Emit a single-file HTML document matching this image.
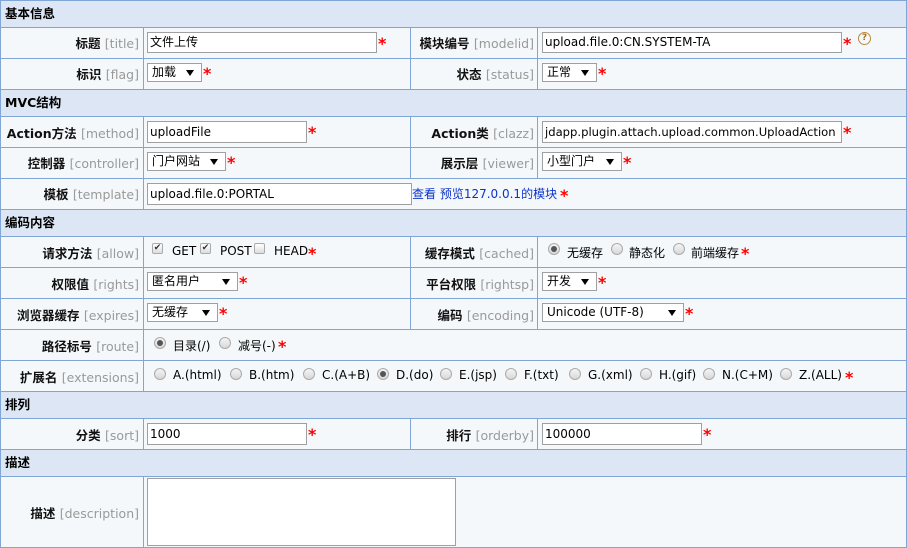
<!DOCTYPE html>
<html><head><meta charset="utf-8"><style>
*{box-sizing:border-box;margin:0;padding:0}
body{width:907px;height:548px;background:#f5f8fb;position:relative;overflow:hidden;font-family:"DejaVu Sans","Noto Sans CJK SC",sans-serif;font-size:12px;color:#000}
.a{position:absolute}
.h{position:absolute;left:0;width:907px;background:#dde6f4;font-weight:bold;font-size:12.5px;padding-left:5px}
.hl{position:absolute;left:0;width:907px;height:1px;background:#7fa6d4}
.vl{position:absolute;width:1px;background:#7fa6d4}
.lb{position:absolute;text-align:right;font-weight:bold;color:#111;white-space:nowrap;font-size:12.5px;margin-top:-1px}
.lb span{font-weight:normal;color:#999}
.in{position:absolute;background:#fff;border:1px solid #a0a0a0;padding-left:2px;white-space:nowrap;overflow:hidden}
.sel{position:absolute;background:#fff;border:1px solid #a0a0a0;padding-left:4px;white-space:nowrap}
.sel:after{content:"";position:absolute;right:7px;top:6px;border-left:4px solid transparent;border-right:4px solid transparent;border-top:6px solid #000}
.st{position:absolute;color:#f00;font-weight:bold;font-size:16px}
.cb{position:absolute;width:11px;height:11px;border:1px solid #aaa;border-radius:2px;background:linear-gradient(#fff,#ddd);font-size:9px;line-height:9px;text-align:center;color:#333}
.rd{position:absolute;width:12px;height:12px;border:1px solid #aaa;border-radius:50%;background:linear-gradient(#f4f4f4,#d8d8d8)}
.rd.on:after{content:"";position:absolute;left:2px;top:2px;width:6px;height:6px;border-radius:50%;background:#555}
.t{position:absolute;white-space:nowrap;margin-top:-1px}
</style></head><body>
<div class="h" style="top:1px;height:26px;line-height:26px">基本信息</div>
<div class="h" style="top:90px;height:26px;line-height:26px">MVC结构</div>
<div class="h" style="top:210px;height:26px;line-height:26px">编码内容</div>
<div class="h" style="top:392px;height:26px;line-height:26px">排列</div>
<div class="h" style="top:450px;height:26px;line-height:26px">描述</div>
<div class="hl" style="top:0"></div><div class="hl" style="top:27px"></div><div class="hl" style="top:58px"></div><div class="hl" style="top:89px"></div><div class="hl" style="top:116px"></div><div class="hl" style="top:147px"></div><div class="hl" style="top:178px"></div><div class="hl" style="top:209px"></div><div class="hl" style="top:236px"></div><div class="hl" style="top:267px"></div><div class="hl" style="top:298px"></div><div class="hl" style="top:329px"></div><div class="hl" style="top:360px"></div><div class="hl" style="top:391px"></div><div class="hl" style="top:418px"></div><div class="hl" style="top:449px"></div><div class="hl" style="top:476px"></div><div class="hl" style="top:547px"></div>
<div class="vl" style="left:0;top:0;height:548px"></div><div class="vl" style="left:906px;top:0;height:548px"></div>
<div class="vl" style="left:143px;top:27px;height:62px"></div><div class="vl" style="left:410px;top:27px;height:62px"></div><div class="vl" style="left:537px;top:27px;height:62px"></div>
<div class="vl" style="left:143px;top:116px;height:93px"></div><div class="vl" style="left:410px;top:116px;height:62px"></div><div class="vl" style="left:537px;top:116px;height:62px"></div>
<div class="vl" style="left:143px;top:236px;height:155px"></div><div class="vl" style="left:410px;top:236px;height:93px"></div><div class="vl" style="left:537px;top:236px;height:93px"></div>
<div class="vl" style="left:143px;top:418px;height:31px"></div><div class="vl" style="left:410px;top:418px;height:31px"></div><div class="vl" style="left:537px;top:418px;height:31px"></div>
<div class="vl" style="left:143px;top:476px;height:72px"></div>

<div class="lb" style="right:768px;top:34px">标题 <span>[title]</span></div>
<div class="in" style="left:147px;top:32px;width:230px;height:21px;line-height:19px">文件上传</div><div class="st" style="left:378px;top:34px">*</div>
<div class="lb" style="right:373px;top:34px">模块编号 <span>[modelid]</span></div>
<div class="in" style="left:542px;top:32px;width:300px;height:21px;line-height:19px">upload.file.0:CN.SYSTEM-TA</div><div class="st" style="left:843px;top:34px">*</div>
<div class="a" style="left:858px;top:32px;width:13px;height:13px;border:1px solid #b88a40;border-radius:50%;color:#b07020;font-size:9px;line-height:11px;text-align:center;font-weight:bold">?</div>

<div class="lb" style="right:768px;top:65px">标识 <span>[flag]</span></div>
<div class="sel" style="left:147px;top:63px;width:55px;height:19px;line-height:17px">加载</div><div class="st" style="left:203px;top:64px">*</div>
<div class="lb" style="right:373px;top:65px">状态 <span>[status]</span></div>
<div class="sel" style="left:542px;top:63px;width:55px;height:19px;line-height:17px">正常</div><div class="st" style="left:598px;top:64px">*</div>

<div class="lb" style="right:768px;top:124px">Action方法 <span>[method]</span></div>
<div class="in" style="left:147px;top:121px;width:160px;height:22px;line-height:20px">uploadFile</div><div class="st" style="left:308px;top:123px">*</div>
<div class="lb" style="right:373px;top:124px">Action类 <span>[clazz]</span></div>
<div class="in" style="left:542px;top:121px;width:300px;height:22px;line-height:20px;font-size:11.6px">jdapp.plugin.attach.upload.common.UploadAction</div><div class="st" style="left:843px;top:123px">*</div>

<div class="lb" style="right:768px;top:154px">控制器 <span>[controller]</span></div>
<div class="sel" style="left:147px;top:152px;width:79px;height:19px;line-height:17px">门户网站</div><div class="st" style="left:227px;top:153px">*</div>
<div class="lb" style="right:373px;top:154px">展示层 <span>[viewer]</span></div>
<div class="sel" style="left:542px;top:152px;width:80px;height:19px;line-height:17px">小型门户</div><div class="st" style="left:623px;top:153px">*</div>

<div class="lb" style="right:768px;top:185px">模板 <span>[template]</span></div>
<div class="in" style="left:147px;top:183px;width:265px;height:22px;line-height:20px">upload.file.0:PORTAL</div>
<div class="t" style="left:412px;top:186px;color:#0b33cc">查看 预览127.0.0.1的模块</div><div class="st" style="left:560px;top:186px">*</div>

<div class="lb" style="right:768px;top:244px">请求方法 <span>[allow]</span></div>
<div class="cb" style="left:152px;top:243px">✔</div><div class="t" style="left:172px;top:245px">GET</div>
<div class="cb" style="left:200px;top:243px">✔</div><div class="t" style="left:220px;top:245px">POST</div>
<div class="cb" style="left:254px;top:243px"></div><div class="t" style="left:274px;top:245px">HEAD</div><div class="st" style="left:308px;top:244px">*</div>
<div class="lb" style="right:373px;top:244px">缓存模式 <span>[cached]</span></div>
<div class="rd on" style="left:548px;top:243px"></div><div class="t" style="left:567px;top:245px">无缓存</div>
<div class="rd" style="left:611px;top:243px"></div><div class="t" style="left:629px;top:245px">静态化</div>
<div class="rd" style="left:673px;top:243px"></div><div class="t" style="left:691px;top:245px">前端缓存</div><div class="st" style="left:741px;top:244px">*</div>

<div class="lb" style="right:768px;top:275px">权限值 <span>[rights]</span></div>
<div class="sel" style="left:147px;top:272px;width:91px;height:19px;line-height:17px">匿名用户</div><div class="st" style="left:239px;top:273px">*</div>
<div class="lb" style="right:373px;top:275px">平台权限 <span>[rightsp]</span></div>
<div class="sel" style="left:542px;top:272px;width:55px;height:19px;line-height:17px">开发</div><div class="st" style="left:598px;top:273px">*</div>

<div class="lb" style="right:768px;top:306px">浏览器缓存 <span>[expires]</span></div>
<div class="sel" style="left:147px;top:303px;width:71px;height:19px;line-height:17px">无缓存</div><div class="st" style="left:219px;top:304px">*</div>
<div class="lb" style="right:373px;top:306px">编码 <span>[encoding]</span></div>
<div class="sel" style="left:542px;top:303px;width:142px;height:19px;line-height:17px">Unicode (UTF-8)</div><div class="st" style="left:685px;top:304px">*</div>

<div class="lb" style="right:768px;top:337px">路径标号 <span>[route]</span></div>
<div class="rd on" style="left:154px;top:337px"></div><div class="t" style="left:173px;top:338px">目录(/)</div>
<div class="rd" style="left:219px;top:337px"></div><div class="t" style="left:238px;top:338px">减号(-)</div><div class="st" style="left:278px;top:337px">*</div>

<div class="lb" style="right:768px;top:368px">扩展名 <span>[extensions]</span></div>
<div class="rd" style="left:154px;top:368px"></div><div class="t" style="left:173px;top:369px">A.(html)</div>
<div class="rd" style="left:230px;top:368px"></div><div class="t" style="left:249px;top:369px">B.(htm)</div>
<div class="rd" style="left:303px;top:368px"></div><div class="t" style="left:322px;top:369px">C.(A+B)</div>
<div class="rd on" style="left:377px;top:368px"></div><div class="t" style="left:396px;top:369px">D.(do)</div>
<div class="rd" style="left:440px;top:368px"></div><div class="t" style="left:459px;top:369px">E.(jsp)</div>
<div class="rd" style="left:505px;top:368px"></div><div class="t" style="left:524px;top:369px">F.(txt)</div>
<div class="rd" style="left:569px;top:368px"></div><div class="t" style="left:588px;top:369px">G.(xml)</div>
<div class="rd" style="left:640px;top:368px"></div><div class="t" style="left:659px;top:369px">H.(gif)</div>
<div class="rd" style="left:703px;top:368px"></div><div class="t" style="left:722px;top:369px">N.(C+M)</div>
<div class="rd" style="left:780px;top:368px"></div><div class="t" style="left:799px;top:369px">Z.(ALL)</div><div class="st" style="left:845px;top:368px">*</div>

<div class="lb" style="right:768px;top:426px">分类 <span>[sort]</span></div>
<div class="in" style="left:147px;top:423px;width:160px;height:22px;line-height:20px">1000</div><div class="st" style="left:308px;top:425px">*</div>
<div class="lb" style="right:373px;top:426px">排行 <span>[orderby]</span></div>
<div class="in" style="left:542px;top:423px;width:160px;height:22px;line-height:20px">100000</div><div class="st" style="left:703px;top:425px">*</div>

<div class="lb" style="right:768px;top:504px">描述 <span>[description]</span></div>
<div class="in" style="left:147px;top:478px;width:309px;height:68px"></div>
</body></html>
